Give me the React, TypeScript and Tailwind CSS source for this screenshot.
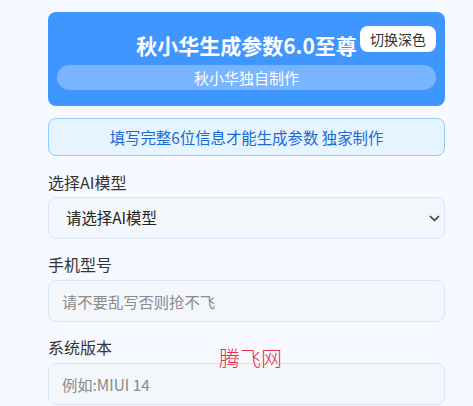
import React, { useState } from 'react';

const FONT = { fontFamily: '"Noto Sans CJK SC", "Noto Sans", sans-serif' };

function Field({ label, placeholder }: { label: string; placeholder: string }) {
  return (
    <div className="mt-[13px]">
      <div className="text-[16px] leading-[24px] text-[#333]">{label}</div>
      <input
        className="mt-[4px] block h-[42px] w-full rounded-[8px] border border-[#d6e6f7] bg-[#f3f6fa] px-[13px] text-[15.3px] text-[#333] outline-none placeholder:text-[#8a8a8a]"
        placeholder={placeholder}
      />
    </div>
  );
}

export default function App() {
  const [dark, setDark] = useState(false);

  return (
    <div className="relative min-h-[406px] bg-[#f6f9ff] pt-[12px]" style={FONT}>
      <div className="ml-[48px] w-[397px]">
        <div className="relative rounded-[8px] bg-[#4096ff] px-[9px] pb-[16px] pt-[19px]">
          <h1 className="text-center text-[21px] font-bold leading-[28px] text-white">
            秋小华生成参数6.0至尊
          </h1>
          <button
            onClick={() => setDark(!dark)}
            className="absolute right-[9px] top-[14px] h-[26px] w-[76px] rounded-[8px] bg-white text-[14px] leading-[26px] text-[#333]"
          >
            切换深色
          </button>
          <div className="mt-[6px] h-[25px] rounded-full bg-white/30 text-center text-[15px] leading-[25px] text-white">
            秋小华独自制作
          </div>
        </div>

        <div className="mt-[12px] h-[38px] rounded-[8px] border border-[#91caff] bg-[#e6f4ff] text-center text-[15.4px] leading-[36px] text-[#1a6ad6]">
          填写完整6位信息才能生成参数 独家制作
        </div>

        <div className="mt-[14px]">
          <div className="text-[16px] leading-[24px] text-[#333]">选择AI模型</div>
          <div className="mt-[3px] flex h-[42px] items-center justify-between rounded-[8px] border border-[#d6e6f7] bg-[#f3f6fa] pl-[17px] pr-[4px]">
            <span className="text-[15.4px] text-[#222]">请选择AI模型</span>
            <svg width="11" height="7" viewBox="0 0 11 7" fill="none">
              <path d="M1 1l4.5 4.5L10 1" stroke="#333" strokeWidth="1.5" />
            </svg>
          </div>
        </div>

        <Field label="手机型号" placeholder="请不要乱写否则抢不飞" />
        <Field label="系统版本" placeholder="例如:MIUI 14" />
      </div>

      <div className="absolute left-[219px] top-[343px] text-[21px] font-light leading-[28px] text-[#ea2f4f]">
        腾飞网
      </div>
    </div>
  );
}
